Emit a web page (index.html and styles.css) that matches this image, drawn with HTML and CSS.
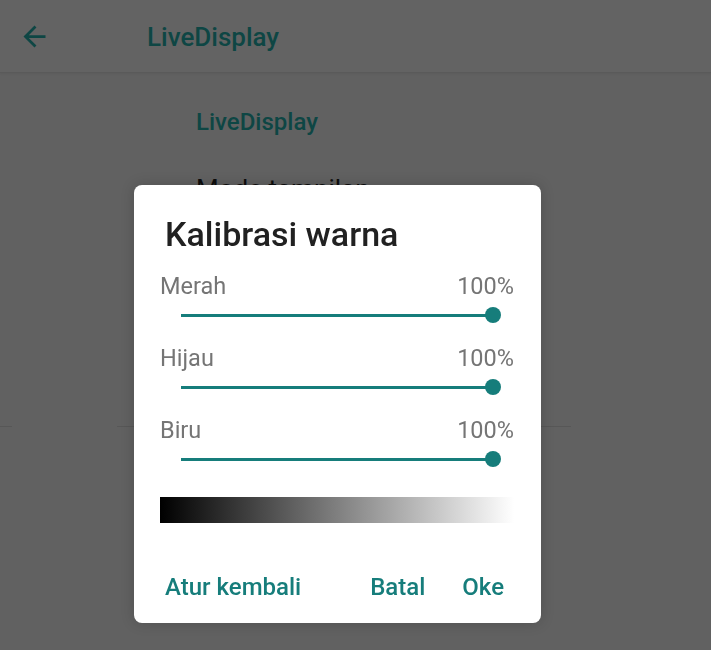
FILE: index.html
```html
<!DOCTYPE html>
<html lang="id">
<head>
<meta charset="utf-8">
<title>LiveDisplay</title>
<link rel="stylesheet" href="styles.css">
</head>
<body>
<div class="page">
  <header class="appbar">
    <svg class="back" viewBox="0 0 24 24" width="33" height="33"><path d="M20 11H7.83l5.59-5.59L12 4l-8 8 8 8 1.41-1.41L7.83 13H20v-2z" fill="currentColor"/></svg>
    <span class="appbar-title">LiveDisplay</span>
  </header>
  <main class="content">
    <div class="category">LiveDisplay</div>
    <div class="pref-title">Mode tampilan</div>
    <div class="spacer"></div>
    <div class="dividers"><span class="div-a"></span><span class="div-b"></span></div>
  </main>
</div>

<div class="dialog">
  <h1 class="dialog-title">Kalibrasi warna</h1>
  <div class="dialog-body">
    <div class="row">
      <div class="row-labels"><span>Merah</span><span>100%</span></div>
      <div class="slider"><div class="track"></div><div class="thumb"></div></div>
    </div>
    <div class="row">
      <div class="row-labels"><span>Hijau</span><span>100%</span></div>
      <div class="slider"><div class="track"></div><div class="thumb"></div></div>
    </div>
    <div class="row">
      <div class="row-labels"><span>Biru</span><span>100%</span></div>
      <div class="slider"><div class="track"></div><div class="thumb"></div></div>
    </div>
    <div class="gradient"></div>
  </div>
  <div class="actions">
    <span class="btn btn-reset">Atur kembali</span>
    <span class="btn">Batal</span>
    <span class="btn">Oke</span>
  </div>
</div>
</body>
</html>
```

FILE: styles.css
```css
html, body {
  margin: 0;
  padding: 0;
}
body {
  background: #616161;
  font-family: Roboto, "Noto Sans", sans-serif;
  width: 711px;
  height: 650px;
  overflow: hidden;
}
.page {
  display: flex;
  flex-direction: column;
}
.appbar {
  height: 72px;
  display: flex;
  align-items: center;
  padding-left: 18px;
  border-bottom: 1px solid #5a5a5a;
  box-shadow: 0 1px 2px rgba(0,0,0,0.06);
  background: #636363;
}
.back {
  color: #0e4644;
  display: block;
}
.appbar-title {
  margin-left: 96px;
  font-size: 26px;
  font-weight: 500;
  color: #0e4644;
  line-height: 30px;
  padding-top: 2px;
}
.content {
  display: flex;
  flex-direction: column;
}
.category {
  padding-left: 196px;
  margin-top: 34px;
  font-size: 24px;
  font-weight: 500;
  color: #0e4644;
  line-height: 30px;
}
.pref-title {
  padding-left: 196px;
  margin-top: 36px;
  font-size: 26px;
  color: #0d0d0d;
  line-height: 32px;
}
.spacer {
  height: 221px;
}
.dividers {
  display: flex;
  height: 1px;
}
.div-a {
  width: 12px;
  background: #575757;
}
.div-b {
  margin-left: 105px;
  width: 454px;
  background: #575757;
}
.dialog {
  position: fixed;
  left: 134px;
  top: 185px;
  width: 407px;
  height: 438px;
  box-sizing: border-box;
  background: #ffffff;
  border-radius: 8px;
  box-shadow: 0 0 14px rgba(0,0,0,0.18);
  display: flex;
  flex-direction: column;
  padding-top: 29px;
}
.dialog-title {
  margin: 0;
  padding-left: 31px;
  font-size: 34px;
  font-weight: 500;
  color: #212121;
  line-height: 40px;
}
.dialog-body {
  padding: 18px 27px 0 26px;
  display: flex;
  flex-direction: column;
  gap: 14px;
}
.row {
  display: flex;
  flex-direction: column;
}
.row-labels {
  display: flex;
  justify-content: space-between;
  font-size: 23.5px;
  color: #757575;
  line-height: 28px;
}
.slider {
  position: relative;
  height: 30px;
  margin: 0 21px;
  display: flex;
  align-items: center;
}
.track {
  flex: 1;
  height: 3px;
  background: #167d7b;
}
.thumb {
  position: absolute;
  right: -8px;
  top: 7px;
  width: 16px;
  height: 16px;
  border-radius: 50%;
  background: #167d7b;
}
.gradient {
  margin-top: 9px;
  height: 26px;
  background: linear-gradient(to right, #000000 0%, #0a0a0a 4%, #ffffff 100%);
}
.actions {
  margin-top: 44px;
  display: flex;
  align-items: center;
  padding: 0 37px 0 31px;
  gap: 37px;
}
.btn {
  font-size: 24px;
  font-weight: 500;
  color: #167d7b;
  line-height: 40px;
}
.btn-reset {
  margin-right: auto;
}
```
